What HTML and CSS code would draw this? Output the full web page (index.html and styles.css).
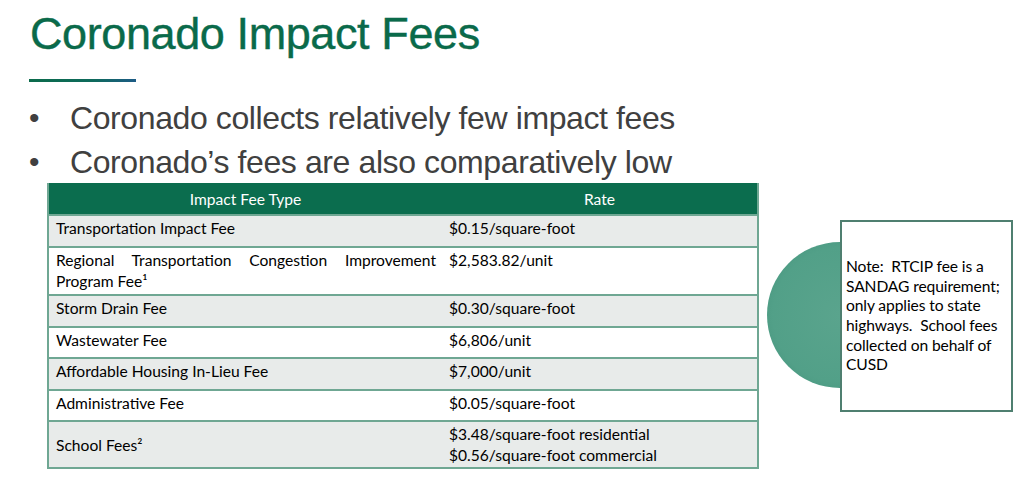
FILE: index.html
```html
<!DOCTYPE html>
<html>
<head>
<meta charset="utf-8">
<link rel="stylesheet" href="styles.css">
</head>
<body>
<div class="slide">
  <h1 class="title">Coronado Impact Fees</h1>
  <div class="rule"></div>
  <ul class="bullets">
    <li>Coronado collects relatively few impact fees</li>
    <li>Coronado’s fees are also comparatively low</li>
  </ul>
  <div class="content">
    <table class="fees">
      <thead>
        <tr><th class="c1">Impact Fee Type</th><th class="c2">Rate</th></tr>
      </thead>
      <tbody>
        <tr class="odd h32"><td>Transportation Impact Fee</td><td>$0.15/square-foot</td></tr>
        <tr class="even h48"><td class="just">Regional Transportation Congestion Improvement Program Fee¹</td><td>$2,583.82/unit</td></tr>
        <tr class="odd h32"><td>Storm Drain Fee</td><td>$0.30/square-foot</td></tr>
        <tr class="even h31"><td>Wastewater Fee</td><td>$6,806/unit</td></tr>
        <tr class="odd h32"><td>Affordable Housing In-Lieu Fee</td><td>$7,000/unit</td></tr>
        <tr class="even h31"><td>Administrative Fee</td><td>$0.05/square-foot</td></tr>
        <tr class="odd h47"><td class="mid">School Fees²</td><td>$3.48/square-foot residential<br>$0.56/square-foot commercial</td></tr>
      </tbody>
    </table>
    <div class="note">
      <div class="circle"></div>
      <div class="note-box"><p class="note-text">Note:&nbsp; RTCIP fee is a SANDAG requirement; only applies to state highways.&nbsp; School fees collected on behalf of CUSD</p></div>
    </div>
  </div>
</div>
</body>
</html>
```
FILE: styles.css
```css
* { box-sizing: border-box; }
html, body { margin: 0; padding: 0; background: #ffffff; }
.slide {
  width: 1024px;
  height: 480px;
  overflow: hidden;
  position: relative;
  font-family: "Liberation Sans", Arial, sans-serif;
}
.title {
  margin: 0;
  padding: 8px 0 0 30px;
  font-size: 45px;
  line-height: 52px;
  font-weight: normal;
  color: #0a6a4a;
  letter-spacing: -0.4px;
  -webkit-text-stroke: 0.4px #0a6a4a;
}
.rule {
  margin: 19px 0 0 29px;
  width: 107px;
  height: 3px;
  background: linear-gradient(90deg, #0b6b4b 0%, #0e6a5c 60%, #1d5b86 100%);
}
.bullets {
  list-style: none;
  margin: 14px 0 0 0;
  padding: 0 0 0 29px;
  color: #404040;
  font-size: 32px;
  line-height: 44px;
  letter-spacing: -0.4px;
}
.bullets li { display: flex; }
.bullets li::before {
  content: "•";
  width: 41px;
  flex: none;
  font-size: 30px;
}
.content {
  display: flex;
  align-items: flex-start;
  margin-top: -1px;
}
.fees {
  margin-left: 47px;
  width: 712px;
  border-collapse: collapse;
  font-family: Lato, "Open Sans", sans-serif;
  font-size: 15.6px;
  color: #000;
  border-left: 2px solid #6fa793;
  border-right: 2px solid #6fa793;
  border-bottom: 2px solid #6fa793;
}
.fees th {
  background: #0b6d4e;
  color: #ffffff;
  font-weight: normal;
  height: 32px;
  padding: 0;
  text-align: center;
}
.fees .c1 { width: 394px; }
.fees td {
  vertical-align: top;
  padding: 2px 6px 0 7px;
  line-height: 21px;
  border-top: 2px solid #6fa793;
}
.fees td.just { text-align: justify; text-align-last: left; }
.fees td.mid { vertical-align: middle; }
.odd td { background: #e8ebea; }
.even td { background: #ffffff; }
.h32 { height: 32px; }
.h31 { height: 31px; }
.h47 { height: 47px; }
.h48 { height: 48px; }
.note {
  position: relative;
  margin: 37px 0 0 81px;
  width: 173px;
  height: 192px;
}
.circle {
  position: absolute;
  left: -73px;
  top: 22px;
  width: 146px;
  height: 146px;
  border-radius: 50%;
  background: radial-gradient(circle at 50% 50%, #5aa48d 0%, #52a088 65%, #3f8d76 100%);
}
.note-box {
  position: relative;
  height: 100%;
  background: #ffffff;
  border: 2px solid #4f7f70;
  padding: 0 0 0 4px;
  display: flex;
  align-items: center;
}
.note-text {
  margin: 0;
  font-family: Lato, "Open Sans", sans-serif;
  font-size: 15.6px;
  line-height: 19.6px;
  letter-spacing: -0.1px;
  color: #000;
}
```
